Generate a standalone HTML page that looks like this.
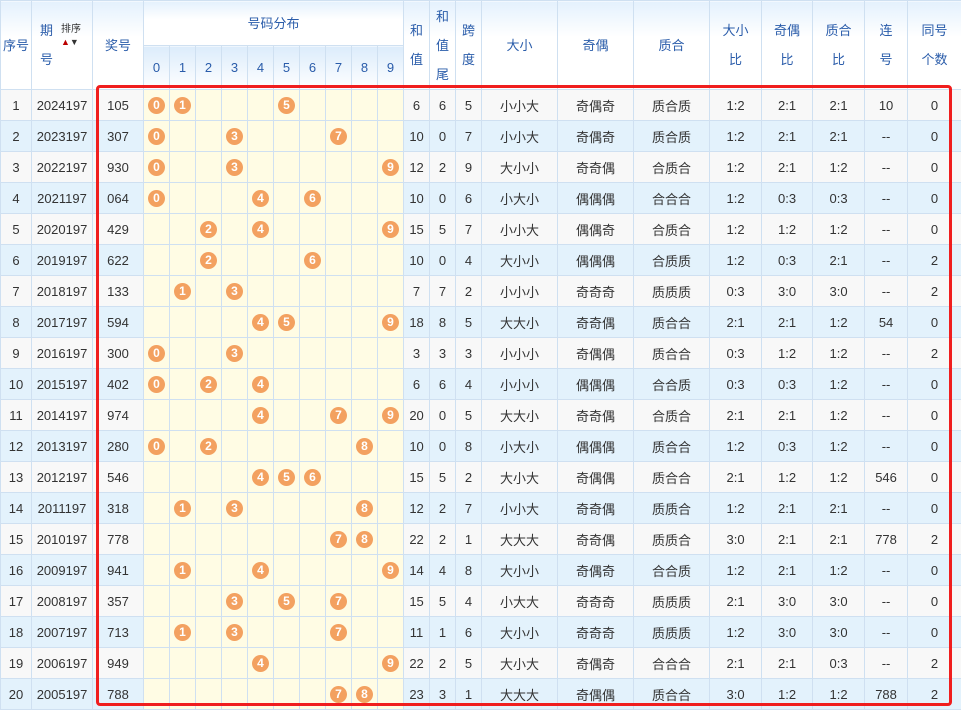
<!DOCTYPE html>
<html><head><meta charset="utf-8"><style>
*{margin:0;padding:0;box-sizing:border-box}
body{width:961px;height:712px;overflow:hidden;background:#fff;font-family:"Liberation Sans","Noto Sans CJK SC",sans-serif;position:relative}
table{border-collapse:collapse;table-layout:fixed;position:absolute;left:0;top:0;width:961px}
td,th{border:1px solid #cfe0f1;text-align:center;font-size:13px;color:#333;font-weight:normal;height:31px;padding:0;overflow:hidden;white-space:nowrap}
th{color:#2a5caa;background:linear-gradient(#e4f1fd,#fff 40%);font-size:13px;line-height:29px}
tr.h2 th{background:linear-gradient(#dcecfb,#fff);height:44px}
tr.h1 th{height:45px}
tr.o td{background:#f8f8f8}
tr.e td{background:#e3f2fc}
tr td.y{background:#fffce4}
b{display:inline-block;width:17px;height:17px;border-radius:50%;background:#f3a160;color:#fff;font-size:12px;line-height:17px;font-weight:bold;vertical-align:middle}
.sort{font-size:10px;color:#333;position:absolute;left:61px;top:24px;line-height:12px}
.red{position:absolute;left:96px;top:85px;width:856px;height:621px;border:3px solid #f01e1e;border-radius:4px}
</style></head><body>
<table>
<colgroup><col style="width:31px"><col style="width:61px"><col style="width:51px"><col style="width:26px"><col style="width:26px"><col style="width:26px"><col style="width:26px"><col style="width:26px"><col style="width:26px"><col style="width:26px"><col style="width:26px"><col style="width:26px"><col style="width:26px"><col style="width:26px"><col style="width:26px"><col style="width:26px"><col style="width:76px"><col style="width:76px"><col style="width:76px"><col style="width:52px"><col style="width:51px"><col style="width:52px"><col style="width:43px"><col style="width:54px"></colgroup>
<tr class="h1"><th rowspan="2">序号</th><th rowspan="2" style="text-align:left;padding-left:8px">期<br>号</th><th rowspan="2">奖号</th><th colspan="10">号码分布</th><th rowspan="2">和<br>值</th><th rowspan="2">和<br>值<br>尾</th><th rowspan="2">跨<br>度</th><th rowspan="2">大小</th><th rowspan="2">奇偶</th><th rowspan="2">质合</th><th rowspan="2">大小<br>比</th><th rowspan="2">奇偶<br>比</th><th rowspan="2">质合<br>比</th><th rowspan="2">连<br>号</th><th rowspan="2">同号<br>个数</th></tr>
<tr class="h2"><th>0</th><th>1</th><th>2</th><th>3</th><th>4</th><th>5</th><th>6</th><th>7</th><th>8</th><th>9</th></tr>
<tr class="o"><td>1</td><td>2024197</td><td>105</td><td class="y"><b>0</b></td><td class="y"><b>1</b></td><td class="y"></td><td class="y"></td><td class="y"></td><td class="y"><b>5</b></td><td class="y"></td><td class="y"></td><td class="y"></td><td class="y"></td><td>6</td><td>6</td><td>5</td><td>小小大</td><td>奇偶奇</td><td>质合质</td><td>1:2</td><td>2:1</td><td>2:1</td><td>10</td><td>0</td></tr>
<tr class="e"><td>2</td><td>2023197</td><td>307</td><td class="y"><b>0</b></td><td class="y"></td><td class="y"></td><td class="y"><b>3</b></td><td class="y"></td><td class="y"></td><td class="y"></td><td class="y"><b>7</b></td><td class="y"></td><td class="y"></td><td>10</td><td>0</td><td>7</td><td>小小大</td><td>奇偶奇</td><td>质合质</td><td>1:2</td><td>2:1</td><td>2:1</td><td>--</td><td>0</td></tr>
<tr class="o"><td>3</td><td>2022197</td><td>930</td><td class="y"><b>0</b></td><td class="y"></td><td class="y"></td><td class="y"><b>3</b></td><td class="y"></td><td class="y"></td><td class="y"></td><td class="y"></td><td class="y"></td><td class="y"><b>9</b></td><td>12</td><td>2</td><td>9</td><td>大小小</td><td>奇奇偶</td><td>合质合</td><td>1:2</td><td>2:1</td><td>1:2</td><td>--</td><td>0</td></tr>
<tr class="e"><td>4</td><td>2021197</td><td>064</td><td class="y"><b>0</b></td><td class="y"></td><td class="y"></td><td class="y"></td><td class="y"><b>4</b></td><td class="y"></td><td class="y"><b>6</b></td><td class="y"></td><td class="y"></td><td class="y"></td><td>10</td><td>0</td><td>6</td><td>小大小</td><td>偶偶偶</td><td>合合合</td><td>1:2</td><td>0:3</td><td>0:3</td><td>--</td><td>0</td></tr>
<tr class="o"><td>5</td><td>2020197</td><td>429</td><td class="y"></td><td class="y"></td><td class="y"><b>2</b></td><td class="y"></td><td class="y"><b>4</b></td><td class="y"></td><td class="y"></td><td class="y"></td><td class="y"></td><td class="y"><b>9</b></td><td>15</td><td>5</td><td>7</td><td>小小大</td><td>偶偶奇</td><td>合质合</td><td>1:2</td><td>1:2</td><td>1:2</td><td>--</td><td>0</td></tr>
<tr class="e"><td>6</td><td>2019197</td><td>622</td><td class="y"></td><td class="y"></td><td class="y"><b>2</b></td><td class="y"></td><td class="y"></td><td class="y"></td><td class="y"><b>6</b></td><td class="y"></td><td class="y"></td><td class="y"></td><td>10</td><td>0</td><td>4</td><td>大小小</td><td>偶偶偶</td><td>合质质</td><td>1:2</td><td>0:3</td><td>2:1</td><td>--</td><td>2</td></tr>
<tr class="o"><td>7</td><td>2018197</td><td>133</td><td class="y"></td><td class="y"><b>1</b></td><td class="y"></td><td class="y"><b>3</b></td><td class="y"></td><td class="y"></td><td class="y"></td><td class="y"></td><td class="y"></td><td class="y"></td><td>7</td><td>7</td><td>2</td><td>小小小</td><td>奇奇奇</td><td>质质质</td><td>0:3</td><td>3:0</td><td>3:0</td><td>--</td><td>2</td></tr>
<tr class="e"><td>8</td><td>2017197</td><td>594</td><td class="y"></td><td class="y"></td><td class="y"></td><td class="y"></td><td class="y"><b>4</b></td><td class="y"><b>5</b></td><td class="y"></td><td class="y"></td><td class="y"></td><td class="y"><b>9</b></td><td>18</td><td>8</td><td>5</td><td>大大小</td><td>奇奇偶</td><td>质合合</td><td>2:1</td><td>2:1</td><td>1:2</td><td>54</td><td>0</td></tr>
<tr class="o"><td>9</td><td>2016197</td><td>300</td><td class="y"><b>0</b></td><td class="y"></td><td class="y"></td><td class="y"><b>3</b></td><td class="y"></td><td class="y"></td><td class="y"></td><td class="y"></td><td class="y"></td><td class="y"></td><td>3</td><td>3</td><td>3</td><td>小小小</td><td>奇偶偶</td><td>质合合</td><td>0:3</td><td>1:2</td><td>1:2</td><td>--</td><td>2</td></tr>
<tr class="e"><td>10</td><td>2015197</td><td>402</td><td class="y"><b>0</b></td><td class="y"></td><td class="y"><b>2</b></td><td class="y"></td><td class="y"><b>4</b></td><td class="y"></td><td class="y"></td><td class="y"></td><td class="y"></td><td class="y"></td><td>6</td><td>6</td><td>4</td><td>小小小</td><td>偶偶偶</td><td>合合质</td><td>0:3</td><td>0:3</td><td>1:2</td><td>--</td><td>0</td></tr>
<tr class="o"><td>11</td><td>2014197</td><td>974</td><td class="y"></td><td class="y"></td><td class="y"></td><td class="y"></td><td class="y"><b>4</b></td><td class="y"></td><td class="y"></td><td class="y"><b>7</b></td><td class="y"></td><td class="y"><b>9</b></td><td>20</td><td>0</td><td>5</td><td>大大小</td><td>奇奇偶</td><td>合质合</td><td>2:1</td><td>2:1</td><td>1:2</td><td>--</td><td>0</td></tr>
<tr class="e"><td>12</td><td>2013197</td><td>280</td><td class="y"><b>0</b></td><td class="y"></td><td class="y"><b>2</b></td><td class="y"></td><td class="y"></td><td class="y"></td><td class="y"></td><td class="y"></td><td class="y"><b>8</b></td><td class="y"></td><td>10</td><td>0</td><td>8</td><td>小大小</td><td>偶偶偶</td><td>质合合</td><td>1:2</td><td>0:3</td><td>1:2</td><td>--</td><td>0</td></tr>
<tr class="o"><td>13</td><td>2012197</td><td>546</td><td class="y"></td><td class="y"></td><td class="y"></td><td class="y"></td><td class="y"><b>4</b></td><td class="y"><b>5</b></td><td class="y"><b>6</b></td><td class="y"></td><td class="y"></td><td class="y"></td><td>15</td><td>5</td><td>2</td><td>大小大</td><td>奇偶偶</td><td>质合合</td><td>2:1</td><td>1:2</td><td>1:2</td><td>546</td><td>0</td></tr>
<tr class="e"><td>14</td><td>2011197</td><td>318</td><td class="y"></td><td class="y"><b>1</b></td><td class="y"></td><td class="y"><b>3</b></td><td class="y"></td><td class="y"></td><td class="y"></td><td class="y"></td><td class="y"><b>8</b></td><td class="y"></td><td>12</td><td>2</td><td>7</td><td>小小大</td><td>奇奇偶</td><td>质质合</td><td>1:2</td><td>2:1</td><td>2:1</td><td>--</td><td>0</td></tr>
<tr class="o"><td>15</td><td>2010197</td><td>778</td><td class="y"></td><td class="y"></td><td class="y"></td><td class="y"></td><td class="y"></td><td class="y"></td><td class="y"></td><td class="y"><b>7</b></td><td class="y"><b>8</b></td><td class="y"></td><td>22</td><td>2</td><td>1</td><td>大大大</td><td>奇奇偶</td><td>质质合</td><td>3:0</td><td>2:1</td><td>2:1</td><td>778</td><td>2</td></tr>
<tr class="e"><td>16</td><td>2009197</td><td>941</td><td class="y"></td><td class="y"><b>1</b></td><td class="y"></td><td class="y"></td><td class="y"><b>4</b></td><td class="y"></td><td class="y"></td><td class="y"></td><td class="y"></td><td class="y"><b>9</b></td><td>14</td><td>4</td><td>8</td><td>大小小</td><td>奇偶奇</td><td>合合质</td><td>1:2</td><td>2:1</td><td>1:2</td><td>--</td><td>0</td></tr>
<tr class="o"><td>17</td><td>2008197</td><td>357</td><td class="y"></td><td class="y"></td><td class="y"></td><td class="y"><b>3</b></td><td class="y"></td><td class="y"><b>5</b></td><td class="y"></td><td class="y"><b>7</b></td><td class="y"></td><td class="y"></td><td>15</td><td>5</td><td>4</td><td>小大大</td><td>奇奇奇</td><td>质质质</td><td>2:1</td><td>3:0</td><td>3:0</td><td>--</td><td>0</td></tr>
<tr class="e"><td>18</td><td>2007197</td><td>713</td><td class="y"></td><td class="y"><b>1</b></td><td class="y"></td><td class="y"><b>3</b></td><td class="y"></td><td class="y"></td><td class="y"></td><td class="y"><b>7</b></td><td class="y"></td><td class="y"></td><td>11</td><td>1</td><td>6</td><td>大小小</td><td>奇奇奇</td><td>质质质</td><td>1:2</td><td>3:0</td><td>3:0</td><td>--</td><td>0</td></tr>
<tr class="o"><td>19</td><td>2006197</td><td>949</td><td class="y"></td><td class="y"></td><td class="y"></td><td class="y"></td><td class="y"><b>4</b></td><td class="y"></td><td class="y"></td><td class="y"></td><td class="y"></td><td class="y"><b>9</b></td><td>22</td><td>2</td><td>5</td><td>大小大</td><td>奇偶奇</td><td>合合合</td><td>2:1</td><td>2:1</td><td>0:3</td><td>--</td><td>2</td></tr>
<tr class="e"><td>20</td><td>2005197</td><td>788</td><td class="y"></td><td class="y"></td><td class="y"></td><td class="y"></td><td class="y"></td><td class="y"></td><td class="y"></td><td class="y"><b>7</b></td><td class="y"><b>8</b></td><td class="y"></td><td>23</td><td>3</td><td>1</td><td>大大大</td><td>奇偶偶</td><td>质合合</td><td>3:0</td><td>1:2</td><td>1:2</td><td>788</td><td>2</td></tr>
</table>
<div class="sort">排序<br><span style="color:#b00;font-size:9px">▲</span><span style="font-size:9px">▼</span></div>
<div class="red"></div>
</body></html>
